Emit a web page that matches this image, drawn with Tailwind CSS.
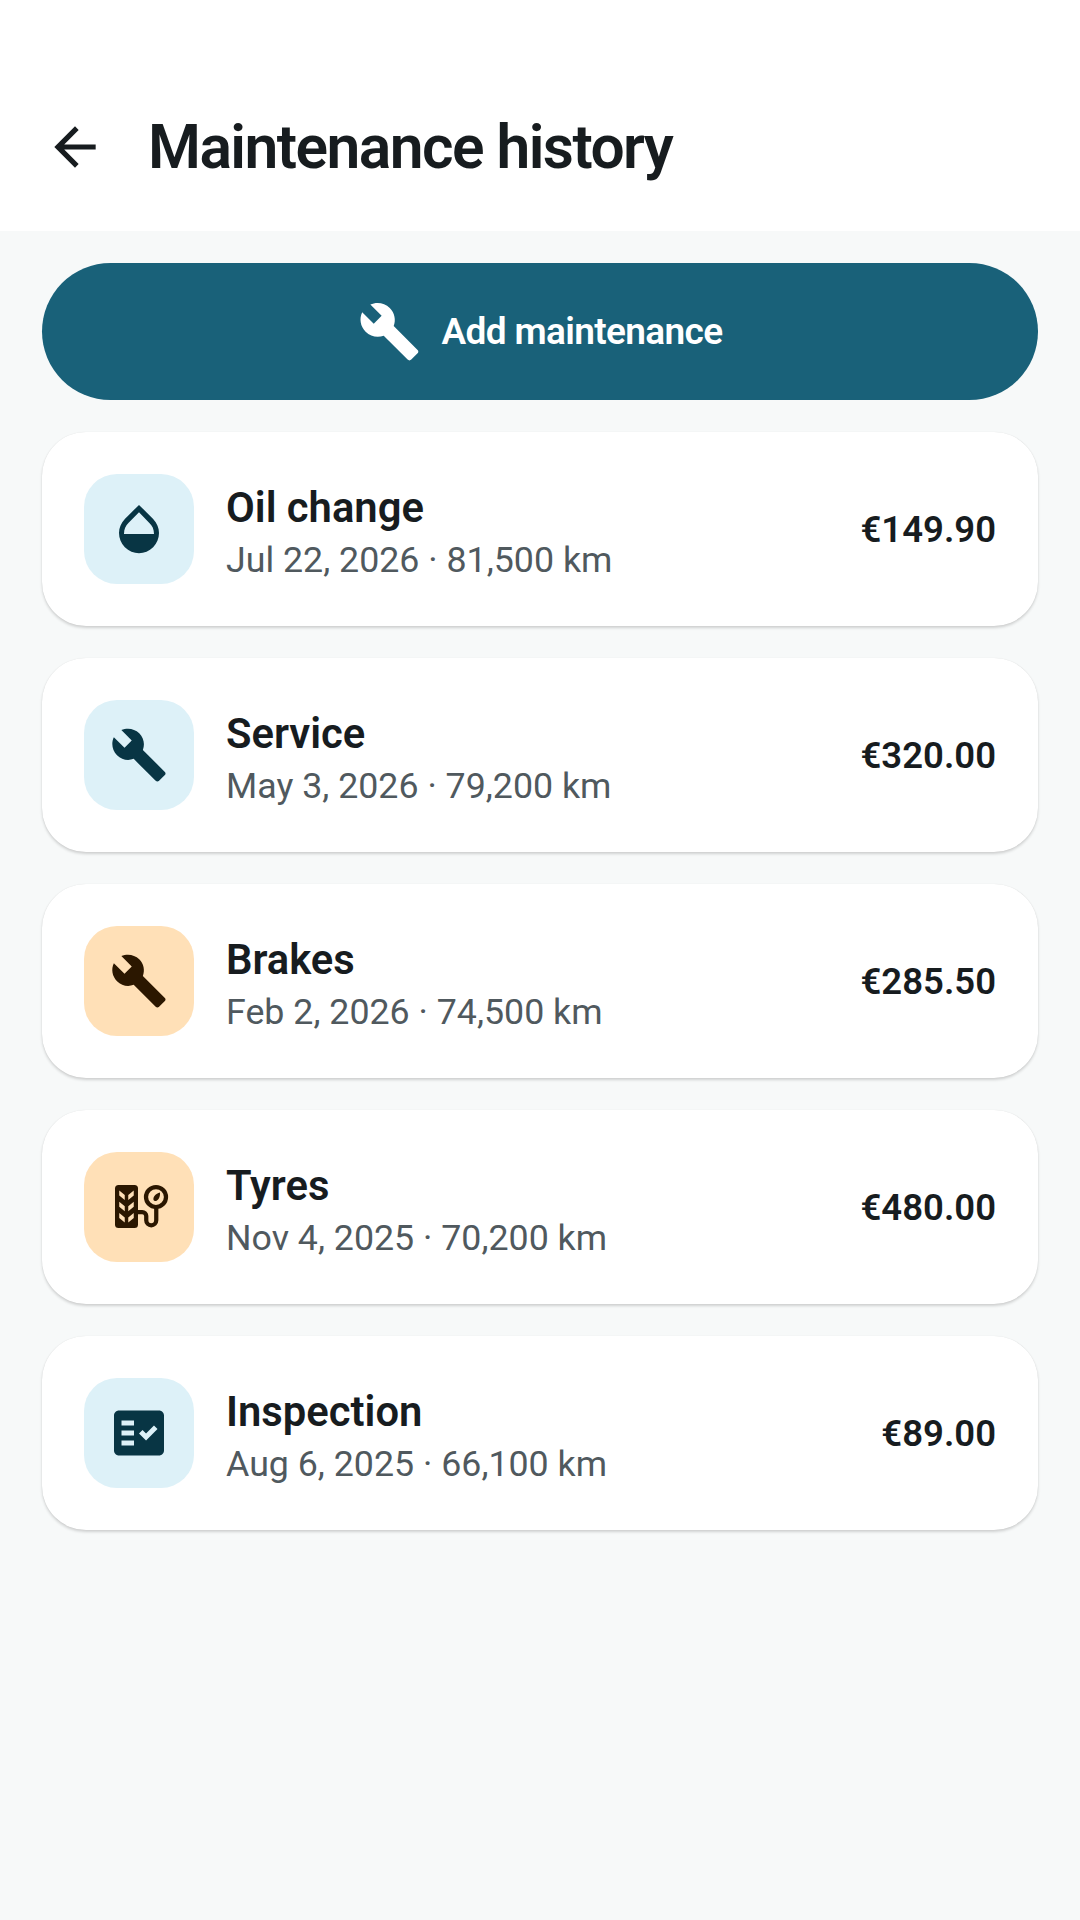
<!DOCTYPE html>
<html lang="en">
<head>
  <meta charset="UTF-8" />
  <title>Maintenance history</title>
  <script src="https://cdn.jsdelivr.net/npm/@tailwindcss/browser@4"></script>
</head>
<body class="bg-[#f7f9f9] min-h-screen text-[#171c1f] font-['Roboto',sans-serif]">

  <!-- Header -->
  <header class="h-[231px] bg-white flex items-center pt-[63px] pl-[44px]">
    <svg class="w-[62px] h-[62px] shrink-0 text-[#171c1f]" viewBox="0 0 24 24" fill="currentColor"><path d="M20 11H7.83l5.59-5.59L12 4l-8 8 8 8 1.41-1.41L7.83 13H20v-2z"/></svg>
    <h1 class="ml-[42px] mt-[3px] text-[60.5px] leading-none font-semibold tracking-[-1.55px]">Maintenance history</h1>
  </header>

  <main class="px-[42px] pt-[32px] flex flex-col gap-[32px]">

    <!-- Add button -->
    <button class="h-[137px] rounded-full bg-[#196179] text-white flex items-center justify-center gap-[21px]">
      <svg class="w-[63px] h-[63px]" viewBox="0 0 24 24" fill="currentColor"><path d="M22.7 19l-9.1-9.1c.9-2.3.4-5-1.5-6.9-2-2-5-2.4-7.4-1.3L9 6 6 9 1.6 4.7C.4 7.1.9 10.1 2.9 12.1c1.9 1.9 4.6 2.4 6.9 1.5l9.1 9.1c.4.4 1 .4 1.4 0l2.3-2.3c.5-.4.5-1.1.1-1.4z"/></svg>
      <span class="mt-[1px] text-[37px] font-semibold tracking-[-0.65px]">Add maintenance</span>
    </button>

    <!-- Oil change -->
    <div class="h-[194px] bg-white rounded-[44px] shadow-[0_0_1px_rgba(0,0,0,0.1),0_2px_3px_rgba(0,0,0,0.16)] flex items-center pl-[42px] pr-[42px]">
      <div class="w-[110px] h-[110px] rounded-[33px] bg-[#ddf1f8] text-[#083544] flex items-center justify-center shrink-0">
        <svg class="w-[60px] h-[60px]" viewBox="0 0 24 24" fill="currentColor"><path d="M17.66 8L12 2.35 6.34 8C4.78 9.56 4 11.64 4 13.64s.78 4.11 2.34 5.67 3.61 2.35 5.66 2.35 4.1-.79 5.66-2.35S20 15.64 20 13.64 19.22 9.56 17.66 8zM6 14c.01-2 .62-3.27 1.76-4.4L12 5.27l4.24 4.38C17.38 10.77 17.99 12 18 14H6z"/></svg>
      </div>
      <div class="ml-[32px] flex-1 pt-[6px]">
        <p class="text-[41.75px] leading-[56px] font-semibold">Oil change</p>
        <p class="text-[35.75px] leading-[49px] text-[#50595e]">Jul 22, 2026 · 81,500 km</p>
      </div>
      <p class="mt-[2px] text-[36.5px] font-semibold">€149.90</p>
    </div>

    <!-- Service -->
    <div class="h-[194px] bg-white rounded-[44px] shadow-[0_0_1px_rgba(0,0,0,0.1),0_2px_3px_rgba(0,0,0,0.16)] flex items-center pl-[42px] pr-[42px]">
      <div class="w-[110px] h-[110px] rounded-[33px] bg-[#ddf1f8] text-[#083544] flex items-center justify-center shrink-0">
        <svg class="w-[58px] h-[58px]" viewBox="0 0 24 24" fill="currentColor"><path d="M22.7 19l-9.1-9.1c.9-2.3.4-5-1.5-6.9-2-2-5-2.4-7.4-1.3L9 6 6 9 1.6 4.7C.4 7.1.9 10.1 2.9 12.1c1.9 1.9 4.6 2.4 6.9 1.5l9.1 9.1c.4.4 1 .4 1.4 0l2.3-2.3c.5-.4.5-1.1.1-1.4z"/></svg>
      </div>
      <div class="ml-[32px] flex-1 pt-[6px]">
        <p class="text-[41.75px] leading-[56px] font-semibold">Service</p>
        <p class="text-[35.75px] leading-[49px] text-[#50595e]">May 3, 2026 · 79,200 km</p>
      </div>
      <p class="mt-[2px] text-[36.5px] font-semibold">€320.00</p>
    </div>

    <!-- Brakes -->
    <div class="h-[194px] bg-white rounded-[44px] shadow-[0_0_1px_rgba(0,0,0,0.1),0_2px_3px_rgba(0,0,0,0.16)] flex items-center pl-[42px] pr-[42px]">
      <div class="w-[110px] h-[110px] rounded-[33px] bg-[#ffe0b7] text-[#2b1700] flex items-center justify-center shrink-0">
        <svg class="w-[58px] h-[58px]" viewBox="0 0 24 24" fill="currentColor"><path d="M22.7 19l-9.1-9.1c.9-2.3.4-5-1.5-6.9-2-2-5-2.4-7.4-1.3L9 6 6 9 1.6 4.7C.4 7.1.9 10.1 2.9 12.1c1.9 1.9 4.6 2.4 6.9 1.5l9.1 9.1c.4.4 1 .4 1.4 0l2.3-2.3c.5-.4.5-1.1.1-1.4z"/></svg>
      </div>
      <div class="ml-[32px] flex-1 pt-[6px]">
        <p class="text-[41.75px] leading-[56px] font-semibold">Brakes</p>
        <p class="text-[35.75px] leading-[49px] text-[#50595e]">Feb 2, 2026 · 74,500 km</p>
      </div>
      <p class="mt-[2px] text-[36.5px] font-semibold">€285.50</p>
    </div>

    <!-- Tyres -->
    <div class="h-[194px] bg-white rounded-[44px] shadow-[0_0_1px_rgba(0,0,0,0.1),0_2px_3px_rgba(0,0,0,0.16)] flex items-center pl-[42px] pr-[42px]">
      <div class="w-[110px] h-[110px] rounded-[33px] bg-[#ffe0b7] text-[#2b1700] flex items-center justify-center shrink-0">
        <svg class="w-[60px] h-[60px]" viewBox="0 0 24 24" fill="currentColor">
          <rect x="2.4" y="3.2" width="9.2" height="17.2" rx="1.4"/>
          <path d="M4.1 5.4L6.3 7.2V9.2L4.1 7.4zM9.9 5.4L7.7 7.2V9.2L9.9 7.4zM4.1 9.9L6.3 11.7V13.7L4.1 11.9zM9.9 9.9L7.7 11.7V13.7L9.9 11.9zM4.1 14.4L6.3 16.2V18.2L4.1 16.4zM9.9 14.4L7.7 16.2V18.2L9.9 16.4z" fill="#ffe0b7"/>
          <circle cx="18.8" cy="8" r="4" fill="none" stroke="currentColor" stroke-width="1.7"/>
          <path d="M17.8 9.2c-.2-1.3.8-2.6 2.6-3 .1 1.8-.6 3.2-1.7 3.4-.4.1-.7-.1-.9-.4z"/>
          <path d="M11.5 14H13.3a1.6 1.6 0 0 1 1.6 1.6V17.3a2 2 0 0 0 4 0V12.5" fill="none" stroke="currentColor" stroke-width="1.7"/>
        </svg>
      </div>
      <div class="ml-[32px] flex-1 pt-[6px]">
        <p class="text-[41.75px] leading-[56px] font-semibold">Tyres</p>
        <p class="text-[35.75px] leading-[49px] text-[#50595e]">Nov 4, 2025 · 70,200 km</p>
      </div>
      <p class="mt-[2px] text-[36.5px] font-semibold">€480.00</p>
    </div>

    <!-- Inspection -->
    <div class="h-[194px] bg-white rounded-[44px] shadow-[0_0_1px_rgba(0,0,0,0.1),0_2px_3px_rgba(0,0,0,0.16)] flex items-center pl-[42px] pr-[42px]">
      <div class="w-[110px] h-[110px] rounded-[33px] bg-[#ddf1f8] text-[#083544] flex items-center justify-center shrink-0">
        <svg class="w-[60px] h-[60px]" viewBox="0 0 24 24" fill="currentColor"><path fill-rule="evenodd" d="M20 3H4c-1.1 0-2 .9-2 2v14c0 1.1.9 2 2 2h16c1.1 0 2-.9 2-2V5c0-1.1-.9-2-2-2zM10 17H5v-2h5v2zm0-4H5v-2h5v2zm0-4H5V7h5v2zm4.82 6L12 12.16l1.41-1.41 1.41 1.42L17.99 9l1.42 1.42L14.82 15z"/></svg>
      </div>
      <div class="ml-[32px] flex-1 pt-[6px]">
        <p class="text-[41.75px] leading-[56px] font-semibold">Inspection</p>
        <p class="text-[35.75px] leading-[49px] text-[#50595e]">Aug 6, 2025 · 66,100 km</p>
      </div>
      <p class="mt-[2px] text-[36.5px] font-semibold">€89.00</p>
    </div>

  </main>
</body>
</html>
